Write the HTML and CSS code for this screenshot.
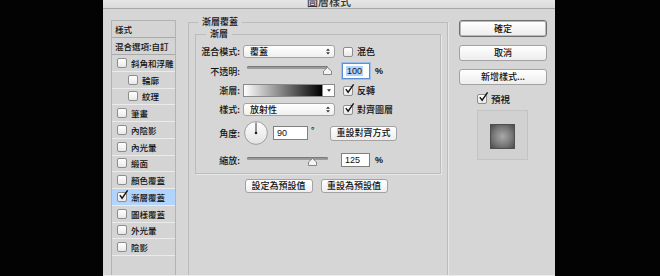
FILE: index.html
```html
<!DOCTYPE html>
<html lang="zh-Hant">
<head>
    <meta charset="UTF-8">
    <title>圖層樣式</title>
    <link rel="stylesheet" href="styles.css">
</head>
<body>
<div class="dialog">
    <div class="titlebar"><span>圖層樣式</span></div>
    <div class="main">
        <ul class="styles-list">
            <li class="head">樣式</li>
            <li class="head">混合選項:自訂</li>
            <li><span class="cb"></span>斜角和浮雕</li>
            <li class="sub"><span class="cb"></span>輪廓</li>
            <li class="sub"><span class="cb"></span>紋理</li>
            <li><span class="cb"></span>筆畫</li>
            <li><span class="cb"></span>內陰影</li>
            <li><span class="cb"></span>內光暈</li>
            <li><span class="cb"></span>緞面</li>
            <li><span class="cb"></span>顏色覆蓋</li>
            <li class="sel"><span class="cb on"><svg viewBox="0 0 12 12"><path d="M2 5.5 L4.5 9 L10.5 0.5"/></svg></span>漸層覆蓋</li>
            <li><span class="cb"></span>圖樣覆蓋</li>
            <li><span class="cb"></span>外光暈</li>
            <li><span class="cb"></span>陰影</li>
        </ul>

        <fieldset class="group">
            <legend>漸層覆蓋</legend>
            <fieldset class="inner">
                <legend>漸層</legend>

                <div class="row r1">
                    <label class="lbl">混合模式:</label>
                    <span class="select">覆蓋<svg class="arrows" viewBox="0 0 5 9"><path d="M0 3.5 L2.5 0.5 L5 3.5Z M0 5.5 L2.5 8.5 L5 5.5Z"/></svg></span>
                    <span class="opt"><span class="cb"></span>混色</span>
                </div>

                <div class="row r2">
                    <label class="lbl">不透明:</label>
                    <div class="slider">
                        <div class="track"></div>
                        <svg class="thumb" style="left: 100%" viewBox="0 0 9 8"><path d="M0.5 7.5 V4 L4.5 0.5 L8.5 4 V7.5 Z"/></svg>
                    </div>
                    <span class="field focus w28"><span class="hl">100</span></span>
                    <span class="unit">%</span>
                </div>

                <div class="row r3">
                    <label class="lbl">漸層:</label>
                    <span class="gradpick"><span class="ramp"></span><span class="drop"><svg viewBox="0 0 5 3"><path d="M0 0 H5 L2.5 3Z"/></svg></span></span>
                    <span class="opt"><span class="cb on"><svg viewBox="0 0 12 12"><path d="M2 5.5 L4.5 9 L10.5 0.5"/></svg></span>反轉</span>
                </div>

                <div class="row r4">
                    <label class="lbl">樣式:</label>
                    <span class="select">放射性<svg class="arrows" viewBox="0 0 5 9"><path d="M0 3.5 L2.5 0.5 L5 3.5Z M0 5.5 L2.5 8.5 L5 5.5Z"/></svg></span>
                    <span class="opt"><span class="cb on"><svg viewBox="0 0 12 12"><path d="M2 5.5 L4.5 9 L10.5 0.5"/></svg></span>對齊圖層</span>
                </div>

                <div class="row r5">
                    <label class="lbl">角度:</label>
                    <svg class="dial" viewBox="0 0 24 24">
                        <defs>
                            <linearGradient id="dialbg" x1="0" y1="0" x2="0" y2="1">
                                <stop offset="0" stop-color="#fdfdfd"/>
                                <stop offset="1" stop-color="#e2e2e2"/>
                            </linearGradient>
                        </defs>
                        <circle cx="12" cy="12" r="11.4" fill="url(#dialbg)" stroke="#8c8c8c" stroke-width="0.8"/>
                        <line x1="12" y1="12" x2="12" y2="1.5" stroke="#222" stroke-width="0.9"/>
                        <circle cx="12" cy="12" r="1.3" fill="#222"/>
                    </svg>
                    <span class="field w35">90</span>
                    <span class="deg">°</span>
                    <button class="btn w67">重設對齊方式</button>
                </div>

                <div class="row r6">
                    <label class="lbl">縮放:</label>
                    <div class="slider">
                        <div class="track"></div>
                        <svg class="thumb" style="left: 81%" viewBox="0 0 9 8"><path d="M0.5 7.5 V4 L4.5 0.5 L8.5 4 V7.5 Z"/></svg>
                    </div>
                    <span class="field w29">125</span>
                    <span class="unit">%</span>
                </div>
            </fieldset>

            <div class="defaults">
                <button class="btn w68">設定為預設值</button>
                <button class="btn w67">重設為預設值</button>
            </div>
        </fieldset>

        <div class="side">
            <button class="btn big default">確定</button>
            <button class="btn big">取消</button>
            <button class="btn big">新增樣式...</button>
            <span class="preview-check"><span class="cb on"><svg viewBox="0 0 12 12"><path d="M2 5.5 L4.5 9 L10.5 0.5"/></svg></span>預視</span>
            <div class="preview"><div class="swatch"></div></div>
        </div>
    </div>
</div>
</body>
</html>
```

FILE: styles.css
```css
body {
    margin: 0;
    background: #030303;
    font-family: "Noto Sans CJK TC", "Liberation Sans", sans-serif;
    font-size: 9px;
    font-weight: 500;
    color: #111;
}

.dialog {
    margin-left: 103px;
    width: 452px;
    height: 275px;
    background: #d6d6d6;
    border-bottom: 1px solid #ececec;
    display: flex;
    flex-direction: column;
    overflow: hidden;
}

.titlebar {
    height: 8px;
    border-bottom: 1px solid #a8a8a8;
    background: linear-gradient(#e6e6e6, #dadada);
    text-align: center;
    overflow: hidden;
}

.titlebar span {
    display: block;
    font-size: 11px;
    line-height: 12px;
    margin-top: -5px;
    color: #333;
}

.main {
    display: flex;
    flex: 1;
    min-height: 0;
}

/* liste des styles */
.styles-list {
    list-style: none;
    margin: 11px 0 0 8px;
    padding: 0;
    width: 63px;
    border: 1px solid #b3b3b3;
    border-bottom: none;
    background: #d4d4d4;
    font-size: 8.5px;
}

.styles-list li {
    box-sizing: border-box;
    height: 16.75px;
    display: flex;
    align-items: center;
    padding-left: 5px;
    border-bottom: 1px solid #ebebeb;
    white-space: nowrap;
}

.styles-list li.head {
    height: 17px;
    padding-left: 3px;
    border-bottom: 1px solid #a9a9a9;
}

.styles-list li.sub {
    padding-left: 16px;
}

.styles-list li.sel {
    background: #b2d3fb;
}

.styles-list .cb {
    margin-right: 4px;
}

/* case a cocher */
.cb {
    position: relative;
    display: inline-block;
    box-sizing: border-box;
    width: 10px;
    height: 10px;
    border: 1px solid #8d8d8d;
    border-radius: 2px;
    background: linear-gradient(#ffffff, #e9e9e9);
    flex: none;
}

.cb svg {
    position: absolute;
    left: 0;
    top: -3px;
    width: 11px;
    height: 11px;
    overflow: visible;
}

.cb svg path {
    fill: none;
    stroke: #111;
    stroke-width: 1.5;
}

/* groupes */
fieldset {
    margin: 0;
    border: 1px solid #bcbcbc;
    box-shadow: 1px 1px 0 #e6e6e6;
}

legend {
    line-height: 12px;
    padding: 0 4px;
}

.group {
    box-sizing: border-box;
    width: 260px;
    margin: 7px 0 0 12px;
    padding: 0 6px;
    border-bottom: none;
}

.group > legend {
    margin-left: 3px;
}

.inner {
    padding: 0 0 6px 0;
}

.inner > legend {
    margin-left: 10px;
}

.row {
    display: flex;
    align-items: center;
    white-space: nowrap;
}

.r1 { margin-top: 5px; height: 13px; }
.r2 { margin-top: 5px; height: 16px; }
.r3 { margin-top: 5px; height: 13px; }
.r4 { margin-top: 6px; height: 13px; }
.r5 { margin-top: 5px; height: 24px; }
.r6 { margin-top: 8px; height: 14px; }

.lbl {
    width: 44px;
    margin-right: 3px;
    text-align: right;
}

.select {
    box-sizing: border-box;
    width: 92px;
    height: 13px;
    display: flex;
    align-items: center;
    padding-left: 6px;
    border: 1px solid #a3a3a3;
    border-radius: 3px;
    background: linear-gradient(#ffffff, #efefef);
}

.arrows {
    width: 4px;
    height: 7px;
    margin-left: auto;
    margin-right: 4px;
    fill: #333;
}

.opt {
    display: flex;
    align-items: center;
    margin-left: 8px;
}

.opt .cb {
    margin-right: 4px;
}

.slider {
    position: relative;
    width: 81px;
    height: 10px;
    margin-left: 4px;
    align-self: flex-start;
}

.r2 .slider { margin-top: 2px; }
.r6 .slider { margin-top: 3px; }

.track {
    height: 3px;
    margin-top: 1px;
    border-radius: 2px;
    background: #9c9c9c;
    box-shadow: inset 0 1px 1px #777;
}

.thumb {
    position: absolute;
    top: 2px;
    width: 9px;
    height: 8px;
    margin-left: -5px;
}

.thumb path {
    fill: #f4f4f4;
    stroke: #7b7b7b;
    stroke-width: 0.9;
}

.field {
    box-sizing: border-box;
    height: 14px;
    display: flex;
    align-items: center;
    padding-left: 3px;
    border: 1px solid #7f7f7f;
    background: #fff;
    font-family: "Liberation Sans", sans-serif;
    font-size: 9px;
}

.r2 .field { margin-left: 14px; }
.r6 .field { margin-left: 13px; }
.r5 .field { margin-left: 5px; }

.field.focus {
    height: 16px;
    border: 1px solid #5d8fd6;
    box-shadow: 0 0 0 1px #9dbfee;
}

.hl {
    background: #b3d3fb;
    padding: 0 1px;
}

.w28 { width: 28px; }
.w29 { width: 29px; }
.w35 { width: 35px; }
.w67 { width: 67px; }
.w68 { width: 68px; }

.unit {
    margin-left: 5px;
    font-family: "Liberation Sans", sans-serif;
    font-weight: bold;
}

.gradpick {
    box-sizing: border-box;
    width: 92px;
    height: 13px;
    display: flex;
    border: 1px solid #8a8a8a;
    background: #fff;
}

.ramp {
    flex: 1;
    background: linear-gradient(90deg, #ffffff, #000000);
}

.drop {
    width: 11px;
    display: flex;
    align-items: center;
    justify-content: center;
    border-left: 1px solid #8a8a8a;
}

.drop svg {
    width: 4px;
    height: 3px;
    fill: #333;
}

.dial {
    width: 24px;
    height: 24px;
    margin-left: 1px;
}

.deg {
    width: 19px;
    padding-left: 3px;
    align-self: flex-start;
    margin-top: 3px;
}

.btn {
    box-sizing: border-box;
    height: 15px;
    padding: 0;
    border: 1px solid #a2a2a2;
    border-radius: 3px;
    background: linear-gradient(#ffffff, #ededed);
    font-family: "Noto Sans CJK TC", "Liberation Sans", sans-serif;
    font-size: 9px;
    font-weight: 500;
    color: #111;
    line-height: 12px;
}

.defaults {
    display: flex;
    justify-content: center;
    gap: 8px;
    margin-top: 5px;
    padding-right: 4px;
}

.defaults .btn {
    height: 14px;
}

/* colonne de droite */
.side {
    display: flex;
    flex-direction: column;
    padding: 11px 0 0 11px;
}

.btn.big {
    width: 88px;
    height: 16px;
    margin-bottom: 8px;
}

.btn.default {
    height: 17px;
    border: 1px solid #6e6e6e;
    box-shadow: inset 0 0 0 1px #b9b9b9;
    margin-bottom: 8px;
}

.preview-check {
    display: flex;
    align-items: center;
    margin: 0 0 0 18px;
    height: 12px;
    font-size: 9.5px;
}

.preview-check .cb {
    margin-right: 4px;
}

.preview {
    box-sizing: border-box;
    width: 51px;
    height: 50px;
    margin: 5px 0 0 18px;
    border: 1px solid #c3c3c3;
    background: #d1d1d1;
    display: flex;
    align-items: center;
    justify-content: center;
}

.swatch {
    box-sizing: border-box;
    width: 25px;
    height: 25px;
    margin-top: 2px;
    border: 1px solid #4f4f4f;
    background: radial-gradient(circle, #a9a9a9 0%, #7a7a7a 55%, #4a4a4a 100%);
}
```
